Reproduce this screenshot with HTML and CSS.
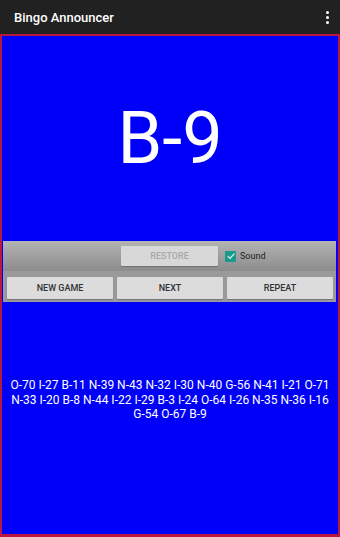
FILE: index.html
```html
<!DOCTYPE html>
<html>
<head>
<meta charset="utf-8">
<link rel="stylesheet" href="styles.css">
</head>
<body>
<div class="appbar">
  <span class="title">Bingo Announcer</span>
  <span class="menu"><i></i><i></i><i></i></span>
</div>
<div class="content">
  <div class="current">B-9</div>
  <div class="controls">
    <div class="row-top">
      <div class="btn disabled restore">RESTORE</div>
      <label class="sound"><span class="check"><svg viewBox="0 0 10 10" width="10" height="10"><path d="M1.8 5.2 L4 7.4 L8.4 2.6" fill="none" stroke="#e0f2f1" stroke-width="1.2"/></svg></span>Sound</label>
    </div>
    <div class="row-bottom">
      <div class="btn">NEW GAME</div>
      <div class="btn">NEXT</div>
      <div class="btn">REPEAT</div>
    </div>
  </div>
  <div class="history">O-70 I-27 B-11 N-39 N-43 N-32 I-30 N-40 G-56 N-41 I-21 O-71 N-33 I-20 B-8 N-44 I-22 I-29 B-3 I-24 O-64 I-26 N-35 N-36 I-16 G-54 O-67 B-9</div>
</div>
</body>
</html>
```
FILE: styles.css
```css
html, body {
  margin: 0;
  padding: 0;
}
body {
  width: 340px;
  height: 537px;
  overflow: hidden;
  font-family: Roboto, "Liberation Sans", sans-serif;
  background: #212121;
}
.appbar {
  height: 34px;
  background: #212121;
  display: flex;
  align-items: center;
  justify-content: space-between;
  padding: 0 11px 0 14px;
  box-sizing: border-box;
}
.title {
  color: #ffffff;
  font-size: 13px;
  font-weight: 500;
}
.menu {
  display: flex;
  flex-direction: column;
  gap: 2px;
}
.menu i {
  display: block;
  width: 3px;
  height: 3px;
  background: #fff;
  border-radius: 50%;
}
.content {
  height: 503px;
  box-sizing: border-box;
  border: 2px solid #b81840;
  border-bottom-width: 3px;
  background: #0000f8;
  display: flex;
  flex-direction: column;
}
.current {
  height: 205px;
  display: flex;
  align-items: center;
  justify-content: center;
  color: #ffffff;
  font-size: 72px;
  padding-top: 0;
  box-sizing: border-box;
}
.controls {
  margin: 0 2px 0 1px;
  height: 61px;
  display: flex;
  flex-direction: column;
}
.row-top {
  height: 30px;
  background: linear-gradient(#b4b4b4, #8c8c8c);
  display: flex;
  align-items: center;
  padding-left: 118px;
  gap: 7px;
}
.row-bottom {
  flex: 1;
  background: #9a9a9a;
  display: flex;
  gap: 4px;
  padding: 6px 3px 3px 4px;
}
.btn {
  flex: 1;
  background: #dcdcdc;
  color: #333;
  font-size: 9px;
  font-weight: 500;
  display: flex;
  align-items: center;
  justify-content: center;
  border-radius: 1px;
  box-shadow: 0 1px 1px rgba(0,0,0,0.25);
}
.restore {
  flex: none;
  width: 97px;
  height: 20px;
  color: #a8a8a8;
  background: #d8d8d8;
}
.sound {
  display: flex;
  align-items: center;
  gap: 4px;
  font-size: 9px;
  color: #222;
}
.check {
  width: 11px;
  height: 11px;
  background: #1a9a8c;
  border-radius: 1px;
  display: flex;
  align-items: center;
  justify-content: center;
}
.check svg {
  display: block;
}
.history {
  margin-top: 76px;
  padding: 0 6px;
  color: #ffffff;
  font-size: 12px;
  line-height: 14.5px;
  text-align: center;
}
```
